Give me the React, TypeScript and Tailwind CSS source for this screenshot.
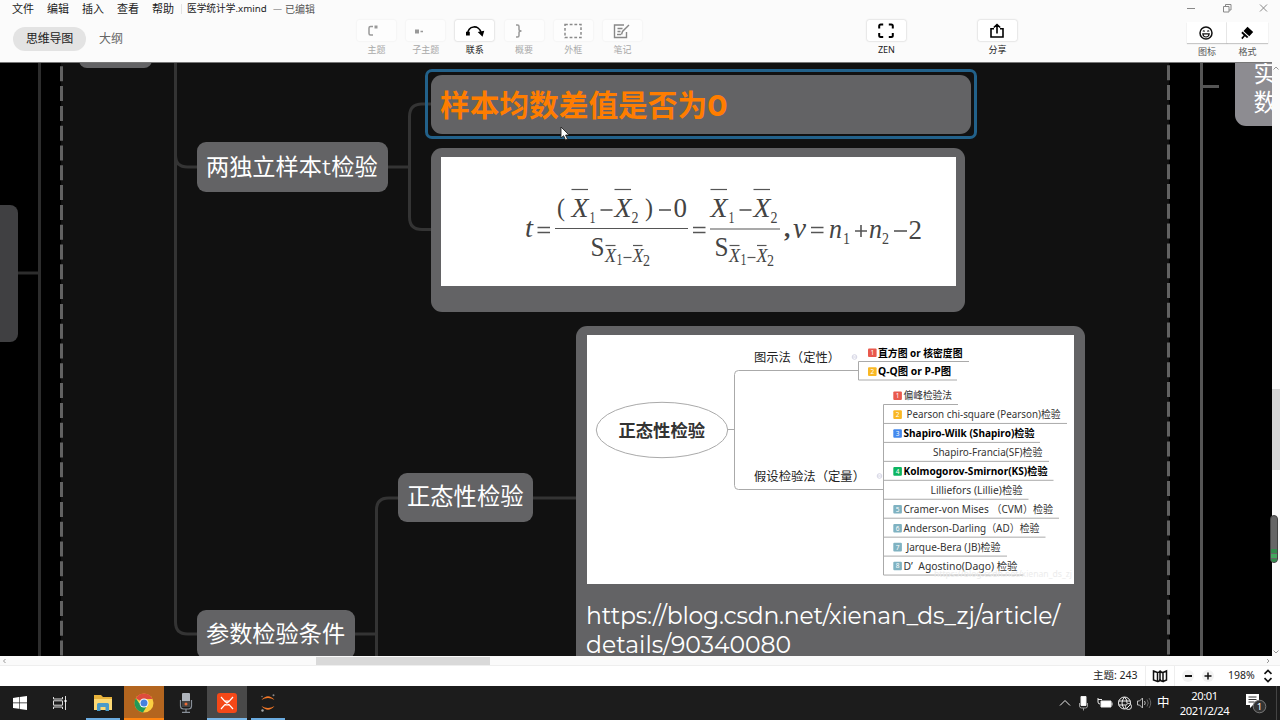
import React from "react";

type TextProps = {
  x: number;
  y: number;
  w?: number;
  size: number;
  bold?: boolean;
  italic?: boolean;
  fill?: string;
  serif?: boolean;
  children: string;
};

const SANS = '"Noto Sans","Noto Sans CJK SC",sans-serif';
const SERIF = '"Liberation Serif",serif';

function Label({ x, y, w, size, bold, italic, fill = "#222", serif, children }: TextProps) {
  return (
    <text
      x={x}
      y={y}
      fontSize={size}
      fontWeight={bold ? 700 : 400}
      fontStyle={italic ? "italic" : "normal"}
      fontFamily={serif ? SERIF : SANS}
      fill={fill}
      textLength={w}
      lengthAdjust="spacingAndGlyphs"
    >
      {children}
    </text>
  );
}

function ToolButton({ label, active, children }: { label: string; active?: boolean; children: React.ReactNode }) {
  return (
    <div className={active ? "flex w-[39px] flex-col items-center text-[#222]" : "flex w-[39px] flex-col items-center text-[#a9a9a9]"}>
      <div
        className={
          active
            ? "flex h-[21px] w-full items-center justify-center rounded-xs bg-white shadow-[0_0_2px_rgba(0,0,0,0.28)]"
            : "flex h-[21px] w-full items-center justify-center rounded-xs bg-[#fdfdfd] shadow-[0_0_2px_rgba(0,0,0,0.08)]"
        }
      >
        {children}
      </div>
      <span className="mt-[3px] whitespace-nowrap text-[9px] leading-[12px]">{label}</span>
    </div>
  );
}

function Header() {
  return (
    <header className="flex h-[62px] shrink-0 bg-[#fbfbfb] text-[#222]">
      <div className="flex w-[357px] flex-col">
        <div className="flex h-[18px] items-center pl-3 text-[11px] leading-[18px] whitespace-nowrap">
          <span className="w-[35px]">文件</span>
          <span className="w-[35px]">编辑</span>
          <span className="w-[35px]">插入</span>
          <span className="w-[35px]">查看</span>
          <span className="w-[29px]">帮助</span>
          <span className="mr-[5px] h-2.5 w-px bg-[#e3e3e3]" />
          <span className="w-[86px] text-[9.700px]">医学统计学.xmind</span>
          <span className="w-[12px] text-[9px] text-[#666]">—</span>
          <span className="text-[10px] text-[#555]">已编辑</span>
        </div>
        <div className="mt-[9px] flex items-center pl-[13px]">
          <span className="flex h-[24px] w-[73px] items-center justify-center rounded-full bg-[#e3e3e3] text-[12px] tracking-[-0.2px]">思维导图</span>
          <span className="ml-[13px] text-[12px] text-[#666]">大纲</span>
        </div>
      </div>
      <div className="flex gap-[10.2px] pt-[20px]">
        <ToolButton label="主题">
          <svg className="mr-2 h-3.5 w-3.5" viewBox="0 0 14 14" fill="none" stroke="#999" strokeWidth="1.5">
            <path d="M7 2.500H4.500Q3 2.500 3 4v5.500Q3 11 4.500 11H7" />
            <path d="M8.500 1.500h3v3h-3z" fill="#999" stroke="none" />
          </svg>
        </ToolButton>
        <ToolButton label="子主题">
          <svg className="mr-3.5 h-3 w-3" viewBox="0 0 12 12" fill="#999">
            <path d="M2 4.500h4v4H2zM7.500 5.800H10v1.400H7.500z" />
          </svg>
        </ToolButton>
        <ToolButton label="联系" active>
          <svg className="h-4 w-5" viewBox="0 0 20 16" fill="none" stroke="#000" strokeWidth="1.6">
            <path d="M2.500 11.500C3 2 14 1.500 16 9.500" />
            <path d="M1 8.700h3.800v3.800H1zM12.700 9l6.600-1.300-1.800 6z" fill="#000" stroke="none" />
          </svg>
        </ToolButton>
        <ToolButton label="概要">
          <svg className="mr-2.5 h-4 w-4" viewBox="0 0 16 16" fill="none" stroke="#999" strokeWidth="1.5">
            <path d="M5 2h1.500Q8 2 8 3.500v3Q8 8 10.500 8 8 8 8 9.500v3Q8 14 6.500 14H5" />
          </svg>
        </ToolButton>
        <ToolButton label="外框">
          <svg className="h-4 w-5" viewBox="0 0 20 16" fill="none" stroke="#8a8a8a" strokeWidth="1.5">
            <rect x="2" y="1.500" width="16" height="13" strokeDasharray="2.8 1.9" />
          </svg>
        </ToolButton>
        <ToolButton label="笔记">
          <svg className="h-4 w-[18px]" viewBox="0 0 18 16" fill="none" stroke="#888" strokeWidth="1.4">
            <path d="M11 2H1.500v12.500h12V9M4.500 5.500h5M4.500 8.500h3M8.500 11.500l1-3 6.500-6.500" />
            <path d="M4 11.500h4" />
          </svg>
        </ToolButton>
      </div>
      <div className="ml-[225px] flex pt-[20px]">
        <ToolButton label="ZEN" active>
          <svg className="h-4 w-4" viewBox="0 0 16 16" fill="none" stroke="#000" strokeWidth="2">
            <path d="M1.200 5.500V3q0-1.500 1.500-1.500h2.500M10.800 1.500h2.500q1.500 0 1.500 1.500v2.500M14.800 10v2.500q0 1.500-1.500 1.500h-2.500M5.200 14H2.700q-1.500 0-1.500-1.500V10" />
          </svg>
        </ToolButton>
      </div>
      <div className="ml-[72px] flex pt-[20px]">
        <ToolButton label="分享" active>
          <svg className="h-4 w-4" viewBox="0 0 16 16" fill="none" stroke="#000" strokeWidth="1.6">
            <path d="M5 5.800H2v8.200h12V5.800h-3M8 10.500V1.800M4.800 4.500L8 1.500l3.200 3" />
          </svg>
        </ToolButton>
      </div>
      <div className="ml-[170px] flex flex-col">
        <div className="flex h-[22px] items-start pt-[3px]">
          <svg className="h-2.5 w-[81px]" viewBox="0 0 81 10" fill="none" stroke="#888" strokeWidth="1">
            <path d="M0 5.500h8M36.500 3.500h5.500v5.500h-5.500zM38.500 3.500v-2h5.500v5.500h-2M73 1.500l7 7M80 1.500l-7 7" />
          </svg>
        </div>
        <div className="flex">
          <div className="flex w-[40px] flex-col items-center">
            <div className="flex h-[21px] w-full items-center justify-center border-r border-[#eee] bg-white shadow-[0_1px_1px_rgba(0,0,0,0.2)]">
              <svg className="h-3.5 w-3.5" viewBox="0 0 14 14" fill="none" stroke="#111" strokeWidth="1.5">
                <circle cx="7" cy="7" r="6" />
                <path d="M3.800 7.800h6.400Q9.800 11 7 11T3.800 7.800zM4 5.500q.8-1.500 1.600 0M8.400 5.500q.8-1.500 1.600 0" strokeWidth="1.200" />
              </svg>
            </div>
            <span className="mt-[3px] text-[9px] leading-[12px] text-[#555]">图标</span>
          </div>
          <div className="flex w-[41px] flex-col items-center">
            <div className="flex h-[21px] w-full items-center justify-center bg-white shadow-[0_1px_1px_rgba(0,0,0,0.2)]">
              <svg className="h-3.5 w-3.5" viewBox="0 0 14 14" fill="#000">
                <path d="M7.500.8L13.200 6 9.300 10.200 3.500 5zM2.500 5.500l6 5.400-1.600 1.200-2-1.800-2.400 2.900-1.300-1.200 2.500-2.800L1.300 7z" />
              </svg>
            </div>
            <span className="mt-[3px] text-[9px] leading-[12px] text-[#555]">格式</span>
          </div>
        </div>
      </div>
    </header>
  );
}

function Bar({ x1, x2, y, width = 1.2 }: { x1: number; x2: number; y: number; width?: number }) {
  return <path d={`M${x1} ${y}H${x2}`} stroke="#555" strokeWidth={width} />;
}

function MeanDifference({ x }: { x: number }) {
  return (
    <g>
      <Bar x1={x} x2={x + 16.5} y={189.5} />
      <Label serif italic x={x} y={217} w={17} size={27} fill="#444">X</Label>
      <Label serif x={x + 18} y={223} w={6} size={16} fill="#444">1</Label>
      <Bar x1={x + 29} x2={x + 41} y={210} width={1.6} />
      <Bar x1={x + 43} x2={x + 59.5} y={189.5} />
      <Label serif italic x={x + 43} y={217} w={17} size={27} fill="#444">X</Label>
      <Label serif x={x + 60} y={223} w={7} size={16} fill="#444">2</Label>
    </g>
  );
}

function StandardError({ x }: { x: number }) {
  return (
    <g>
      <Label serif x={x} y={255.5} w={14} size={28} fill="#444">S</Label>
      <Bar x1={x + 15} x2={x + 25} y={245.5} />
      <Label serif italic x={x + 14.5} y={262} w={11} size={18} fill="#444">X</Label>
      <Label serif x={x + 26} y={265} w={6} size={17} fill="#444">1</Label>
      <Bar x1={x + 33} x2={x + 41} y={257.5} />
      <Bar x1={x + 42.5} x2={x + 52} y={245.5} />
      <Label serif italic x={x + 42} y={262} w={11} size={18} fill="#444">X</Label>
      <Label serif x={x + 52.5} y={266} w={7} size={17} fill="#444">2</Label>
    </g>
  );
}

function Equals({ x }: { x: number }) {
  return (
    <g>
      <Bar x1={x} x2={x + 12.5} y={227.5} width={1.5} />
      <Bar x1={x} x2={x + 12.5} y={232.5} width={1.5} />
    </g>
  );
}

function Formula() {
  return (
    <svg className="h-[129px] w-[515px] bg-white" viewBox="441 157 515 129">
      <Label serif italic x={525} y={237} w={8} size={27} fill="#444">t</Label>
      <Equals x={537.5} />
      <Label serif x={557} y={216} w={8} size={26} fill="#444">(</Label>
      <MeanDifference x={571.5} />
      <Label serif x={645} y={216} w={8} size={26} fill="#444">)</Label>
      <Bar x1={659} x2={671} y={210} width={1.6} />
      <Label serif x={673.5} y={217} w={13.5} size={28} fill="#444">0</Label>
      <Bar x1={555} x2={688} y={228.5} />
      <StandardError x={590.5} />
      <Equals x={693} />
      <MeanDifference x={710.5} />
      <Bar x1={710} x2={780} y={229} />
      <StandardError x={714.5} />
      <Label serif bold x={784} y={237} size={25} fill="#444">,</Label>
      <Label serif italic x={793} y={238} w={13} size={29} fill="#444">ν</Label>
      <Equals x={811} />
      <Label serif italic x={829} y={238} w={13} size={27} fill="#444">n</Label>
      <Label serif x={843} y={244} w={7} size={17} fill="#444">1</Label>
      <path d="M855 231h12M861 225v12" stroke="#555" strokeWidth="1.6" />
      <Label serif italic x={869} y={238} w={13} size={27} fill="#444">n</Label>
      <Label serif x={882} y={244} w={7} size={17} fill="#444">2</Label>
      <Bar x1={894} x2={907} y={231} width={1.6} />
      <Label serif x={908.5} y={238.5} w={13.5} size={28} fill="#444">2</Label>
    </svg>
  );
}

type Row = { text: string; x: number; end: number; line: number; badge?: string; color?: string; bold?: boolean };

const tests: Row[] = [
  { text: "偏峰检验法", x: 903.5, end: 952, line: 958, badge: "1", color: "#e9594d" },
  { text: "Pearson chi-square (Pearson)检验", x: 906.5, end: 1060.5, line: 1067, badge: "2", color: "#f9b824" },
  { text: "Shapiro-Wilk (Shapiro)检验", x: 903.5, end: 1034.5, line: 1040, badge: "3", color: "#4489ee", bold: true },
  { text: "Shapiro-Francia(SF)检验", x: 933, end: 1042.5, line: 1049 },
  { text: "Kolmogorov-Smirnor(KS)检验", x: 903.5, end: 1047.5, line: 1053.5, badge: "4", color: "#0db561", bold: true },
  { text: "Lilliefors (Lillie)检验", x: 930.5, end: 1022.5, line: 1028.5 },
  { text: "Cramer-von Mises （CVM）检验", x: 903.5, end: 1053, line: 1059, badge: "5", color: "#7fb2c1" },
  { text: "Anderson-Darling（AD）检验", x: 903.5, end: 1039.5, line: 1045.5, badge: "6", color: "#7fb2c1" },
  { text: "Jarque-Bera (JB)检验", x: 906.5, end: 1000.5, line: 1007, badge: "7", color: "#7fb2c1" },
  { text: "D’  Agostino(Dago) 检验", x: 903.5, end: 1017.5, line: 1023.5, badge: "8", color: "#7fb2c1" },
];

function Badge({ x, y, n, color }: { x: number; y: number; n: string; color: string }) {
  return (
    <g>
      <rect x={x} y={y - 4.3} width="8.600" height="8.600" rx="1" fill={color} />
      <text x={x + 4.3} y={y + 2.4} fontSize="6.500" fontFamily={SANS} textAnchor="middle" fill="#fff">{n}</text>
    </g>
  );
}

function NormalityDiagram() {
  return (
    <svg className="h-[249px] w-[487px] bg-white" viewBox="587 335 487 249">
      <g fill="none" stroke="#aaa" strokeWidth="1">
        <ellipse cx="662" cy="430" rx="65.700" ry="27.700" />
        <path d="M728 429.500h6.500M858 370.500H738.500q-4 0-4 4v111q0 4 4 4H883.500" />
        <path d="M858.500 361.500v18.500M858.500 361.500H969M858.500 380H957M883.500 404.500V575" />
        {tests.map((t, i) => (
          <path key={t.text} d={`M883.5 ${404.5 + i * 18.95}H${t.line}`} />
        ))}
        <g stroke="#d4d4e4">
          <circle cx="854.500" cy="357" r="2.300" />
          <path d="M853 357h3" />
          <circle cx="879.500" cy="476" r="2.300" />
          <path d="M878 476h3" />
        </g>
      </g>
      <Label bold x={618.5} y={437} w={86.5} size={17.3} fill="#333">正态性检验</Label>
      <Label x={754} y={362} w={86} size={12.5}>图示法（定性）</Label>
      <Label x={754} y={481} w={111} size={12.5}>假设检验法（定量）</Label>
      <Badge x={868} y={352.8} n="1" color="#e9594d" />
      <Label bold x={878} y={356.8} w={84.5} size={10.5} fill="#000">直方图 or 核密度图</Label>
      <Badge x={868} y={371.6} n="2" color="#f9b824" />
      <Label bold x={878} y={375.4} w={73} size={10.5} fill="#000">Q-Q图 or P-P图</Label>
      {tests.map((t, i) => {
        const y = 395.7 + i * 18.93;
        return (
          <g key={t.text}>
            {t.badge && t.color && <Badge x={893.3} y={y} n={t.badge} color={t.color} />}
            <text
              x={t.x}
              y={y + 3.6}
              fontSize="10.400"
              fontWeight={t.bold ? 700 : 400}
              fontFamily={SANS}
              fill={t.bold ? "#000" : "#333"}
              textLength={t.end - t.x}
              lengthAdjust="spacingAndGlyphs"
              style={{ whiteSpace: "pre" }}
            >
              {t.text}
            </text>
          </g>
        );
      })}
      <Label x={934} y={577} w={138} size={9} fill="#ececec">https://blog.csdn.net/xienan_ds_zj</Label>
    </svg>
  );
}

function Canvas() {
  return (
    <main className="relative h-[594px] w-[1272px] overflow-hidden bg-[#111] font-['Montserrat','Noto_Sans_CJK_SC',sans-serif] text-white">
      <svg className="absolute inset-0 h-[594px] w-[1272px]" viewBox="0 62 1272 594" fill="none" strokeWidth="3">
        <path d="M0 62h61v594H0zM1169 62h103v594h-103z" fill="#000" stroke="none" />
        <path d="M39.500 62v594M18 273h20" stroke="#2d2d2d" />
        <path d="M61.500 66.300V656" stroke="#626262" strokeDasharray="15 4.800" />
        <path d="M1168.500 65.200V656" stroke="#626262" strokeDasharray="15 4.800" />
        <path d="M1201.500 62v594M1203 86.500h16" stroke="#555" />
        <path
          d="M175.500 62V622q0 12 12 12H198M175.500 155q0 12 12 12H198M388 167h21.500M432 104H422q-12.500 0-12.500 12.500V217q0 12.500 12.500 12.500H432M354 634h22.500M398 498H388.500q-12 0-12 12V656M533 498H577"
          stroke="#343434"
        />
      </svg>
      <div className="absolute top-[143px] -left-4 h-[137px] w-[34px] rounded-lg bg-[#404042]" />
      <div className="absolute -top-[30px] left-[79px] h-[36px] w-[73px] rounded-lg bg-[#636365]" />
      <div className="absolute top-[80px] left-[197px] flex h-[50px] w-[191px] items-center rounded-[9px] bg-[#636365] pl-[9px] text-[23.2px] whitespace-nowrap">
        两独立样本t检验
      </div>
      <div className="absolute top-[411px] left-[398px] flex h-[49px] w-[135px] items-center rounded-[9px] bg-[#636365] pl-[9px] text-[23.3px] whitespace-nowrap">
        正态性检验
      </div>
      <div className="absolute top-[548px] left-[197px] flex h-[49px] w-[158px] items-center rounded-[9px] bg-[#636365] pl-[9px] text-[23.2px] whitespace-nowrap">
        参数检验条件
      </div>
      <div className="absolute top-[7px] left-[425px] h-[70px] w-[552px] rounded-[7px] border-[3px] border-[#22618a] p-[3px]">
        <div className="flex h-[59px] w-[540px] items-center rounded-[11px] bg-[#636365] pl-[9px] text-[29.7px] leading-[36px] font-bold whitespace-nowrap text-[#ff7d00]">
          样本均数差值是否为0
        </div>
      </div>
      <div className="absolute top-[86px] left-[431px] h-[164px] w-[534px] rounded-[11px] bg-[#636365] pt-[9px] pl-[10px]">
        <Formula />
      </div>
      <div className="absolute top-[264px] left-[576px] h-[345px] w-[509px] rounded-[11px] bg-[#636365] pt-[9px] pl-[11px]">
        <NormalityDiagram />
        <p className="mt-[17px] -ml-px text-[23.5px] leading-[29px] whitespace-nowrap">
          <span className="tracking-[-0.21px]">https://blog.csdn.net/xienan_ds_zj/article/</span>
          <br />
          details/90340080
        </p>
      </div>
      <div className="absolute -top-[12px] left-[1235px] h-[76px] w-[90px] rounded-[11px] bg-[#8d8c91] pt-[9px] pl-[18.5px] text-[23.5px] leading-[29px]">
        实
        <br />
        数
      </div>
      <svg className="absolute top-[64px] left-[560px] h-[15px] w-[10px]" viewBox="0 0 10 15">
        <path d="M1 1v11l2.600-2.300 1.900 4.300 2-.900-1.900-4.100H9z" fill="#fff" stroke="#222" strokeWidth=".9" />
      </svg>
      <div className="absolute top-0 left-0 h-px w-full bg-[#777]" />
    </main>
  );
}

function VerticalScroll() {
  return (
    <div className="relative flex h-[594px] w-2 flex-col items-center bg-[#fafafa]">
      <svg className="mt-[2px] h-2 w-2 shrink-0" viewBox="0 0 8 8" fill="none" stroke="#999">
        <path d="M1.500 5.500L4 3l2.500 2.500" />
      </svg>
      <div className="mt-[317px] h-[81px] w-2 shrink-0 bg-[#d8d8d8]" />
      <svg className="mt-auto h-2 w-2 shrink-0" viewBox="0 0 8 8" fill="none" stroke="#999">
        <path d="M1.500 2.500L4 5l2.500-2.500" />
      </svg>
      <div className="absolute top-[453px] -left-[2px] flex h-[48px] w-2 flex-col justify-end overflow-hidden rounded-full border border-[#444] bg-[#666]">
        <div className="h-1 bg-[#338b4d]" />
        <div className="mt-px h-1 bg-[#45a760]" />
        <div className="mt-px h-[3px] bg-[#338b4d]" />
      </div>
    </div>
  );
}

function StatusBar() {
  return (
    <div className="flex h-[20px] shrink-0 items-center bg-white text-[10.5px] text-[#222]">
      <span className="ml-[1093px] w-[52px] whitespace-nowrap">主题: 243</span>
      <span className="flex h-full w-[30px] items-center justify-center border-x border-[#eee]">
        <svg className="h-3.5 w-4" viewBox="0 0 16 14" fill="none" stroke="#111" strokeWidth="1.500">
          <path d="M1.500 2L5.500 3.500v9L1.500 11zM5.500 3.500Q8 3.500 8 1.500v8.500q0 2.500-2.500 2.500M8 1.500q.5 2 3 2v9Q8 12 8 10M11 3.500L14.500 2v9L11 12.500" />
        </svg>
      </span>
      <span className="ml-[7px] flex h-3 w-3 items-center justify-center rounded-full bg-[#f2f2f2]">
        <span className="h-[1.5px] w-[7px] bg-[#111]" />
      </span>
      <svg className="ml-2 h-3 w-3 rounded-full bg-[#f2f2f2]" viewBox="0 0 12 12" stroke="#111" strokeWidth="1.500">
        <path d="M2.500 6h7M6 2.500v7" />
      </svg>
      <span className="ml-[14px] w-[33px]">198%</span>
      <svg className="h-3.5 w-3.5" viewBox="0 0 12 12" fill="none" stroke="#111" strokeWidth="1.400">
        <path d="M3 4.200l3-3 3 3M3 7.800l3 3 3-3" />
      </svg>
    </div>
  );
}

function Taskbar() {
  return (
    <footer className="flex h-[34px] shrink-0 bg-[#1c1c1c] text-white">
      <div className="flex w-[40px] items-center justify-center">
        <svg className="h-3.5 w-3.5" viewBox="0 0 14 14" fill="#fff">
          <path d="M0 2l6-.9v5.500H0zM6.600 1L14 0v6.600H6.600zM0 7.300h6v5.500L0 12zM6.600 7.300H14V14l-7.400-1z" />
        </svg>
      </div>
      <div className="flex w-[40px] items-center justify-center">
        <svg className="h-3.5 w-3.5" viewBox="0 0 14 14" fill="none" stroke="#ddd">
          <path d="M.5 1v2h9V1M.5 13v-2h9v2M.5 4.800h9v4.400h-9zM12.500 0v14" />
          <path d="M11.500 4h2v2h-2z" fill="#fff" stroke="none" />
        </svg>
      </div>
      <div className="ml-[6px] flex h-full w-[34px] items-center justify-center border-b-2 border-[#6aabe0] pt-[2px]">
        <svg className="h-4 w-5" viewBox="0 0 20 16">
          <path d="M1 0h7l2 2h9v13H1z" fill="#e8b33c" />
          <path d="M1 4h18v11H1z" fill="#fcd974" />
          <path d="M4 16V9.500Q4 8 5.500 8h9Q16 8 16 9.500V16h-3.500v-4h-5v4z" fill="#4b9bc9" />
        </svg>
      </div>
      <div className="ml-[4px] flex h-full w-[40px] items-center justify-center border-b-2 border-[#ff8410] bg-[#b3651f] pt-[2px]">
        <svg className="h-5 w-5" viewBox="0 0 20 20">
          <circle cx="10" cy="10" r="9.500" fill="#fbcf42" />
          <path d="M10 10L1.800 5.200A9.500 9.500 0 0 1 18.600 6H10z" fill="#dd4c3c" />
          <path d="M1.800 5.200A9.500 9.500 0 0 0 9 19.500l4.500-7.500L10 10H5z" fill="#239957" />
          <circle cx="10" cy="10" r="4.500" fill="#fff" />
          <circle cx="10" cy="10" r="3.500" fill="#4680df" />
        </svg>
      </div>
      <div className="flex w-[43px] items-center justify-center">
        <svg className="h-5 w-3.5" viewBox="0 0 14 20" fill="none">
          <rect x="3" y="0" width="8" height="13" rx="1" fill="#aeb3bb" />
          <path d="M3 8h8v6H3z" fill="#444" />
          <circle cx="7" cy="11" r="1.500" fill="#ee6b35" />
          <path d="M1.500 7v6q0 3 3 3h5q3 0 3-3V7M7 16v3M3 19.300h8" stroke="#888f98" strokeWidth="1.200" />
        </svg>
      </div>
      <div className="flex h-full w-[40px] items-center justify-center border-b-2 border-[#79b7e8] bg-[#494949] pt-[2px]">
        <svg className="h-5 w-5" viewBox="0 0 20 20">
          <rect width="20" height="20" rx="3" fill="#f44818" />
          <path d="M4 4l3.500 4h5L16 4M4 16l3.500-4h5l3.500 4M7.500 8l5 4M12.500 8l-5 4" fill="none" stroke="#fff" strokeWidth="1.200" />
        </svg>
      </div>
      <div className="ml-[4px] flex h-full w-[34px] items-center justify-center border-b-2 border-[#6aabe0] pt-[2px]">
        <svg className="h-[18px] w-4" viewBox="0 0 16 18">
          <path d="M1.500 6Q8-1.500 14.500 6 8 2 1.500 6zM1.500 12Q8 19.500 14.500 12 8 16 1.500 12z" fill="#f37726" />
          <circle cx="13.500" cy="1.200" r="1" fill="#888" />
          <circle cx="2.500" cy="16.500" r="1.200" fill="#aaa" />
          <circle cx="2" cy="2.500" r=".7" fill="#888" />
        </svg>
      </div>
      <div className="ml-auto flex items-center">
        <svg className="h-4 w-[96px]" viewBox="0 0 96 16" fill="none" stroke="#eee" strokeWidth="1">
          <path d="M1 10.500l5-5 5 5" />
          <path d="M22 1.500h5v9h-5z" fill="#fff" />
          <path d="M20.500 8v3q0 2 2 2h4q2 0 2-2V8M24.500 13v2.500" stroke="#999" />
          <path d="M42 6h10v6H42zM53 7.500v3" fill="#fff" />
          <path d="M39 4.500h4M39 3v4q0 2 2 2" />
          <circle cx="65.500" cy="8" r="6" />
          <path d="M59.500 6h12M59.500 10h7M65.500 2q-5 6 0 12M65.500 2q3 3 2.500 6" />
          <circle cx="69.500" cy="11.500" r="3" fill="#1c1c1c" />
          <path d="M67.500 13.500l4-4" />
          <path d="M78.500 6h2l3-3v10l-3-3h-2zM85.500 6q1.500 2 0 4" stroke="#bbb" />
          <path d="M88 4.500q2.500 3.500 0 7M90 3q3.500 5 0 10" stroke="#666" />
        </svg>
        <span className="ml-[2px] w-[20px] text-[12.5px]">中</span>
        <div className="flex w-[55px] flex-col items-center text-[11.2px] leading-[15px]">
          <span className="tracking-[-0.4px]">20:01</span>
          <span className="tracking-[-0.4px]">2021/2/24</span>
        </div>
        <svg className="mr-[9px] ml-[13px] h-[22px] w-[22px]" viewBox="0 0 22 22">
          <path d="M1 2h13v11H8l-3 3v-3H1z" fill="#fff" />
          <path d="M3.500 5h8M3.500 7.500h8M3.500 10h6" stroke="#333" />
          <circle cx="14.500" cy="14.500" r="6.300" fill="#333" stroke="#777" />
          <text x="14.500" y="18" textAnchor="middle" fontSize="9.500" fill="#fff" fontFamily={SANS}>1</text>
        </svg>
        <div className="h-full w-px bg-[#444]" />
        <div className="w-[3px]" />
      </div>
    </footer>
  );
}

export default function App() {
  return (
    <div className="flex h-[720px] w-[1280px] flex-col overflow-hidden bg-white font-['Noto_Sans','Noto_Sans_CJK_SC',sans-serif]">
      <Header />
      <div className="flex h-[594px] shrink-0">
        <Canvas />
        <VerticalScroll />
      </div>
      <div className="flex h-[10px] shrink-0 items-center justify-between border-b border-[#eee] bg-[#fafafa]">
        <svg className="h-2 w-2" viewBox="0 0 8 8" fill="none" stroke="#999">
          <path d="M5.500 2L3.500 4l2 2" />
        </svg>
        <div className="mr-auto ml-[308px] h-[8px] w-[174px] bg-[#d9d9d9]" />
        <svg className="mr-2 h-2 w-2" viewBox="0 0 8 8" fill="none" stroke="#999">
          <path d="M3 2l2 2-2 2" />
        </svg>
      </div>
      <StatusBar />
      <Taskbar />
    </div>
  );
}
